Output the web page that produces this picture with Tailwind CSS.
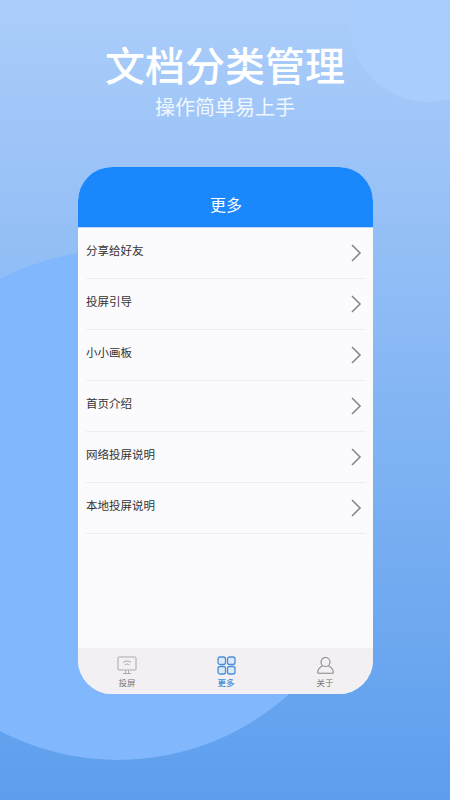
<!DOCTYPE html>
<html lang="zh-CN">
<head>
    <meta charset="UTF-8">
    <title>更多</title>
    <script src="https://cdn.jsdelivr.net/npm/@tailwindcss/browser@4"></script>
</head>
<body class="m-0">
<main class="relative w-[450px] h-[800px] overflow-hidden bg-gradient-to-b from-[#abcdfa] to-[#5c9eed] font-['Noto_Sans_CJK_SC',sans-serif]">
    <!-- background circles -->
    <div class="absolute left-[350px] top-[-54px] w-[156px] h-[156px] rounded-full bg-[#a9cdfd]"></div>
    <div class="absolute left-[-137px] top-[250px] w-[510px] h-[510px] rounded-full bg-[#81b7fc]"></div>

    <div class="relative flex flex-col items-center">
        <h1 class="mt-[35px] h-[58px] leading-[58px] text-[40px] font-medium text-white">文档分类管理</h1>
        <p class="mt-[2px] h-[24px] leading-[24px] text-[20px] font-normal text-white/85">操作简单易上手</p>

        <section class="mt-[48px] w-[295px] h-[527px] rounded-[34px] overflow-hidden flex flex-col bg-[#fbfafc]">
            <header class="h-[61px] shrink-0 pt-[13px] pl-[2px] bg-[#1a87fc] border-b border-[#b9dafc] flex items-center justify-center text-white text-[16px]">更多</header>

            <ul class="flex-1 pl-[8px] pr-[7px]">
                <li class="h-[51px] flex items-center justify-between border-b border-[#eeedef]">
                    <span class="pl-[0.5px] text-[11.5px] text-[#333] -mt-[4px]">分享给好友</span>
                    <svg class="mr-[4px]" width="12" height="20" viewBox="0 0 12 20" fill="none" stroke="#888" stroke-width="1.6"><path d="M2 2l8 8-8 8"/></svg>
                </li>
                <li class="h-[51px] flex items-center justify-between border-b border-[#eeedef]">
                    <span class="pl-[0.5px] text-[11.5px] text-[#333] -mt-[4px]">投屏引导</span>
                    <svg class="mr-[4px]" width="12" height="20" viewBox="0 0 12 20" fill="none" stroke="#888" stroke-width="1.6"><path d="M2 2l8 8-8 8"/></svg>
                </li>
                <li class="h-[51px] flex items-center justify-between border-b border-[#eeedef]">
                    <span class="pl-[0.5px] text-[11.5px] text-[#333] -mt-[4px]">小小画板</span>
                    <svg class="mr-[4px]" width="12" height="20" viewBox="0 0 12 20" fill="none" stroke="#888" stroke-width="1.6"><path d="M2 2l8 8-8 8"/></svg>
                </li>
                <li class="h-[51px] flex items-center justify-between border-b border-[#eeedef]">
                    <span class="pl-[0.5px] text-[11.5px] text-[#333] -mt-[4px]">首页介绍</span>
                    <svg class="mr-[4px]" width="12" height="20" viewBox="0 0 12 20" fill="none" stroke="#888" stroke-width="1.6"><path d="M2 2l8 8-8 8"/></svg>
                </li>
                <li class="h-[51px] flex items-center justify-between border-b border-[#eeedef]">
                    <span class="pl-[0.5px] text-[11.5px] text-[#333] -mt-[4px]">网络投屏说明</span>
                    <svg class="mr-[4px]" width="12" height="20" viewBox="0 0 12 20" fill="none" stroke="#888" stroke-width="1.6"><path d="M2 2l8 8-8 8"/></svg>
                </li>
                <li class="h-[51px] flex items-center justify-between border-b border-[#eeedef]">
                    <span class="pl-[0.5px] text-[11.5px] text-[#333] -mt-[4px]">本地投屏说明</span>
                    <svg class="mr-[4px]" width="12" height="20" viewBox="0 0 12 20" fill="none" stroke="#888" stroke-width="1.6"><path d="M2 2l8 8-8 8"/></svg>
                </li>
            </ul>

            <!-- tab bar -->
            <nav class="h-[46px] shrink-0 bg-[#f2f0f2] grid grid-cols-[99px_99px_99px] pt-[8px]">
                <div class="flex flex-col items-center gap-[2px]">
                    <svg width="20" height="19" viewBox="0 0 20 19" fill="none" stroke="#aaa" stroke-width="1">
                        <rect x="1" y="1" width="18" height="13" rx="1"/>
                        <path d="M6 17.5h8M8.5 14.5v3M11.5 14.5v3"/>
                        <path d="M6 6.5c2.4-2 5.6-2 8 0M7.7 8.8c1.4-1 3.2-1 4.6 0"/>
                    </svg>
                    <span class="text-[8.5px] leading-[11px] text-[#777]">投屏</span>
                </div>
                <div class="flex flex-col items-center gap-[2px]">
                    <svg width="19" height="19" viewBox="0 0 19 19" fill="#dbe9f8" stroke="#4a8fd8" stroke-width="1.3">
                        <rect x="1" y="1" width="7.5" height="7.5" rx="2"/>
                        <rect x="10.5" y="1" width="7.5" height="7.5" rx="2"/>
                        <rect x="1" y="10.5" width="7.5" height="7.5" rx="2"/>
                        <rect x="10.5" y="10.5" width="7.5" height="7.5" rx="2"/>
                    </svg>
                    <span class="text-[8.5px] leading-[11px] font-medium text-[#3e8ddc]">更多</span>
                </div>
                <div class="flex flex-col items-center gap-[2px]">
                    <svg width="19" height="19" viewBox="0 0 19 19" fill="none" stroke="#888" stroke-width="1.1">
                        <circle cx="9.5" cy="6" r="4.5"/>
                        <path d="M6.5 10c-2.5 1.2-4.5 3.6-4.8 6 -.1.8.3 1.3 1 1.3h13.6c.7 0 1.1-.5 1-1.3-.3-2.4-2.3-4.8-4.8-6"/>
                    </svg>
                    <span class="text-[8.5px] leading-[11px] text-[#777]">关于</span>
                </div>
            </nav>
        </section>
    </div>
</main>
</body>
</html>
